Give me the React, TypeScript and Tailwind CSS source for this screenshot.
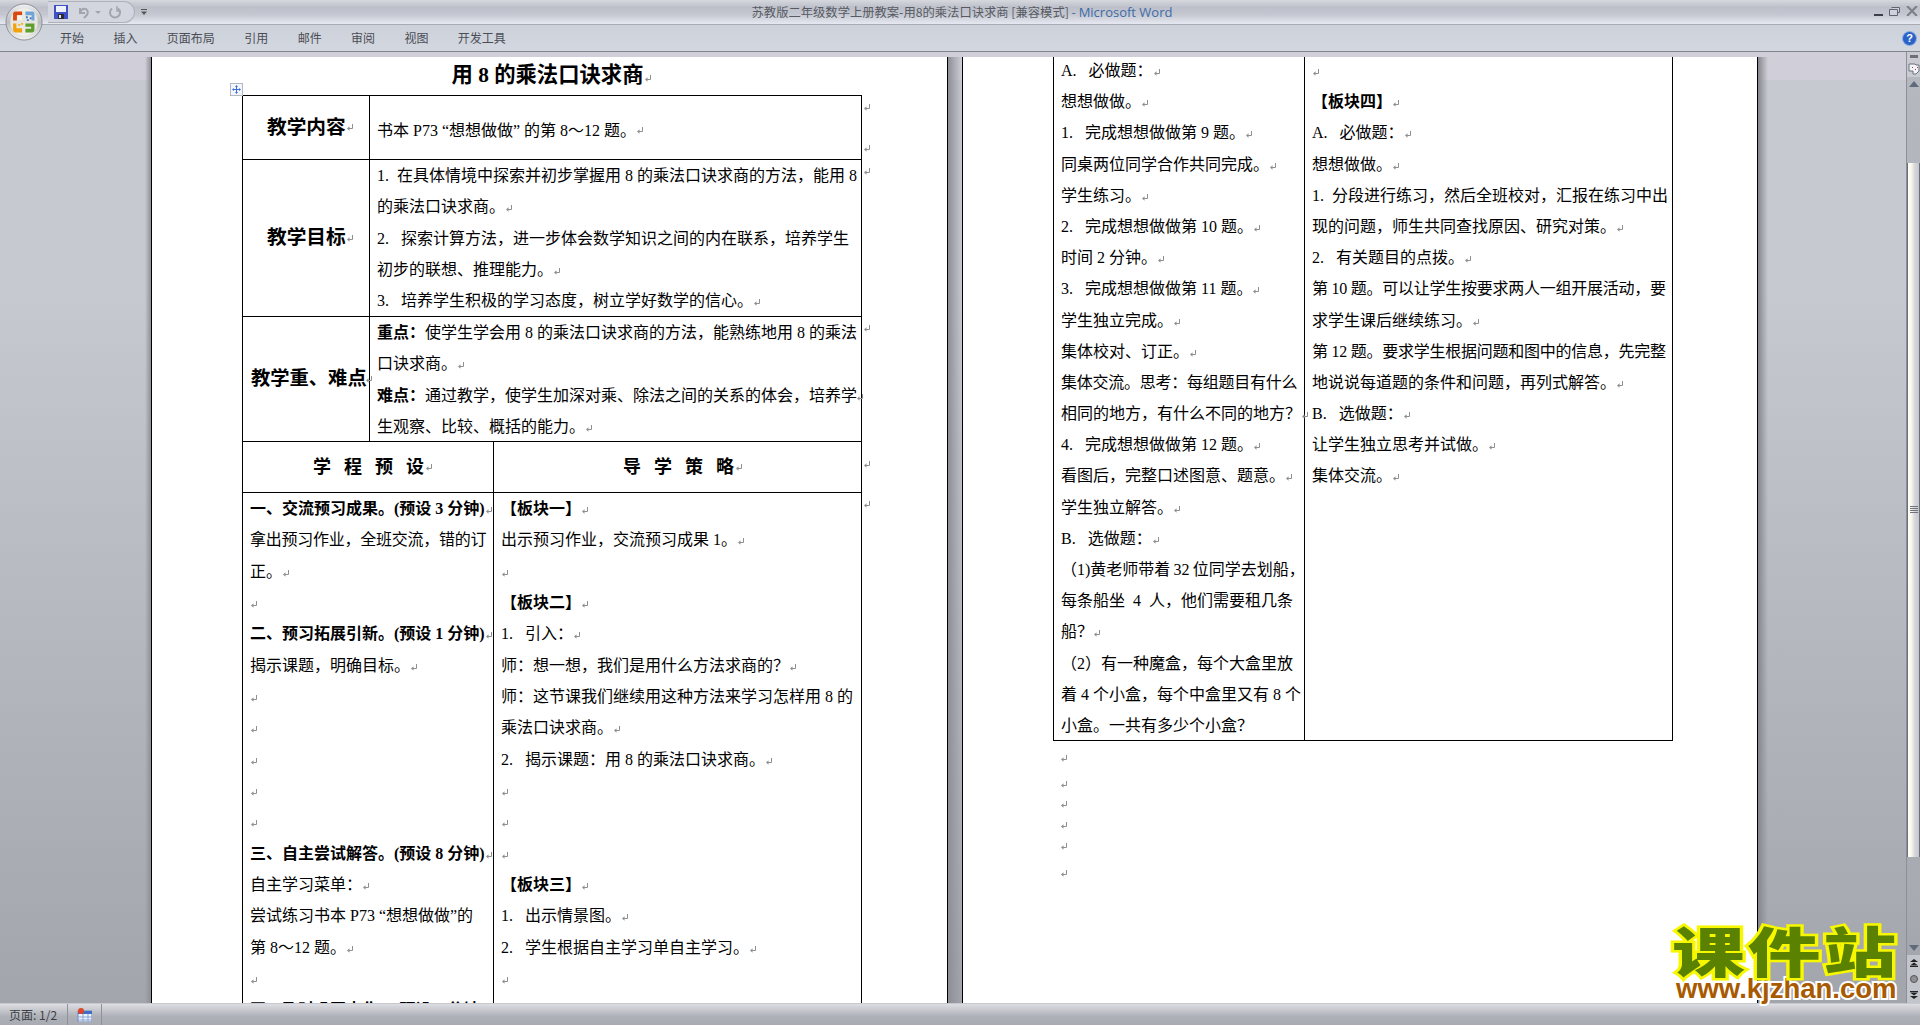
import React from "react";

const Mark = ({ className = "" }: { className?: string }) => (
  <svg viewBox="0 0 8 9" className={"inline-block w-[8px] h-[9px] shrink-0 align-[-1px] " + className}>
    <path d="M6.5 1v4.5H2" fill="none" stroke="#8f8f8f" strokeWidth="1" />
    <path d="M3.5 3.2v4.6L1 5.5z" fill="#8f8f8f" />
  </svg>
);

type L = { t?: string; b?: boolean; m?: boolean; s?: boolean };
const Line = ({ t = "", b = false, m = true, s = false, h }: L & { h: string }) => (
  <div className={(h === "a" ? "h-[31.33px] leading-[31.33px]" : "h-[31.2px] leading-[31.2px]") + " whitespace-pre " + (b ? "font-bold " : "") + (s ? "tracking-[-0.25px]" : "")}>
    {t}
    {m ? <Mark /> : null}
  </div>
);

const Lines = ({ items, h }: { items: L[]; h: string }) => (
  <>
    {items.map((it, i) => (
      <Line key={i} {...it} h={h} />
    ))}
  </>
);

const goal: L[] = [
  { t: "1.  在具体情境中探索并初步掌握用 8 的乘法口诀求商的方法，能用 8", m: false },
  { t: "的乘法口诀求商。" },
  { t: "2.   探索计算方法，进一步体会数学知识之间的内在联系，培养学生", m: false },
  { t: "初步的联想、推理能力。" },
  { t: "3.   培养学生积极的学习态度，树立学好数学的信心。" },
];

const left1: L[] = [
  { t: "一、交流预习成果。(预设 3 分钟)", b: true },
  { t: "拿出预习作业，全班交流，错的订", m: false, s: true },
  { t: "正。" },
  {},
  { t: "二、预习拓展引新。(预设 1 分钟)", b: true },
  { t: "揭示课题，明确目标。" },
  {},
  {},
  {},
  {},
  {},
  { t: "三、自主尝试解答。(预设 8 分钟)", b: true },
  { t: "自主学习菜单：" },
  { t: "尝试练习书本 P73 “想想做做”的", m: false },
  { t: "第 8～12 题。" },
  {},
  { t: "四、及时巩固内化。(预设 4 分钟)", b: true },
];

const right1: L[] = [
  { t: "【板块一】", b: true },
  { t: "出示预习作业，交流预习成果 1。" },
  {},
  { t: "【板块二】", b: true },
  { t: "1.   引入：" },
  { t: "师：想一想，我们是用什么方法求商的？" },
  { t: "师：这节课我们继续用这种方法来学习怎样用 8 的", m: false },
  { t: "乘法口诀求商。" },
  { t: "2.   揭示课题：用 8 的乘法口诀求商。" },
  {},
  {},
  {},
  { t: "【板块三】", b: true },
  { t: "1.   出示情景图。" },
  { t: "2.   学生根据自主学习单自主学习。" },
  {},
  { t: " ", m: false },
];

const left2: L[] = [
  { t: "A.   必做题：" },
  { t: "想想做做。" },
  { t: "1.   完成想想做做第 9 题。" },
  { t: "同桌两位同学合作共同完成。" },
  { t: "学生练习。" },
  { t: "2.   完成想想做做第 10 题。" },
  { t: "时间 2 分钟。" },
  { t: "3.   完成想想做做第 11 题。" },
  { t: "学生独立完成。" },
  { t: "集体校对、订正。" },
  { t: "集体交流。思考：每组题目有什么", m: false, s: true },
  { t: "相同的地方，有什么不同的地方？" },
  { t: "4.   完成想想做做第 12 题。" },
  { t: "看图后，完整口述图意、题意。" },
  { t: "学生独立解答。" },
  { t: "B.   选做题：" },
  { t: "（1)黄老师带着\u200932\u2009位同学去划船，", m: false },
  { t: "每条船坐  4  人，他们需要租几条", m: false },
  { t: "船？" },
  { t: "（2）有一种魔盒，每个大盒里放", m: false },
  { t: "着 4 个小盒，每个中盒里又有 8 个", m: false },
  { t: "小盒。一共有多少个小盒？", m: false },
];

const right2: L[] = [
  {},
  { t: "【板块四】", b: true },
  { t: "A.   必做题：" },
  { t: "想想做做。" },
  { t: "1.  分段进行练习，然后全班校对，汇报在练习中出", m: false },
  { t: "现的问题，师生共同查找原因、研究对策。" },
  { t: "2.   有关题目的点拨。" },
  { t: "第 10 题。可以让学生按要求两人一组开展活动，要", m: false, s: true },
  { t: "求学生课后继续练习。" },
  { t: "第 12 题。要求学生根据问题和图中的信息，先完整", m: false, s: true },
  { t: "地说说每道题的条件和问题，再列式解答。" },
  { t: "B.   选做题：" },
  { t: "让学生独立思考并试做。" },
  { t: "集体交流。" },
];

const Tabs = ["开始", "插入", "页面布局", "引用", "邮件", "审阅", "视图", "开发工具"];

const OfficeButton = () => (
  <svg viewBox="0 0 40 40" className="absolute left-[5px] top-[3px] w-[38px] h-[38px]">
    <defs>
      <linearGradient id="orb" x1="0" y1="0" x2="0" y2="1">
        <stop offset="0" stopColor="#eef0f2" />
        <stop offset="0.5" stopColor="#b9bcc0" />
        <stop offset="1" stopColor="#f2f2ee" />
      </linearGradient>
    </defs>
    <circle cx="20" cy="20" r="19" fill="url(#orb)" stroke="#8b8d92" strokeWidth="1" />
    <circle cx="20" cy="20" r="14.5" fill="#f4f2ea" opacity="0.75" />
    <path d="M8.5 18.5V11.5q0-2.500 2.500-2.500h7v4h-5.500v5.500z" fill="#d9480f" />
    <path d="M13 13h5v5h-5z" fill="#f6f3e8" />
    <path d="M21.500 9h7q2.500 0 2.500 2.500v7h-3V13h-6.500z" fill="#6fa4d8" />
    <path d="M22 14h2v2h-2zM26 15h2v2h-2zM23 17h2v2h-2z" fill="#3a7cc2" />
    <path d="M8.500 21.500h3.500v5h6v4.500h-7q-2.500 0-2.500-2.500z" fill="#f2a20c" />
    <path d="M14 22h2v2h-2zM17 21h2v2h-2z" fill="#e8b31a" />
    <path d="M21.500 21.500H31v7q0 2.500-2.500 2.500h-7v-4h6v-2h-6z" fill="#5f9e2f" />
  </svg>
);

const Arrow = ({ up }: { up?: boolean }) => (
  <svg viewBox="0 0 10 6" className="w-[10px] h-[6px]">
    <path d={up ? "M0 6 5 0l5 6z" : "M0 0l5 6 5-6z"} fill="#5f6a7c" />
  </svg>
);

const ScrollBar = () => (
  <div className="w-[14px] flex flex-col shrink-0 bg-[linear-gradient(to_bottom,#b6b8c0,#a8aab2_90%,#a0a2aa)] border-l border-[#8d8f97]">
    <div className="h-[8px] flex items-center justify-center bg-[#c9cad2]">
      <div className="w-[8px] h-[3px] bg-[#6d7078]" />
    </div>
    <div className="h-[17px] flex items-center justify-center bg-[#c9cbd2]">
      <svg viewBox="0 0 12 12" className="w-[12px] h-[12px]">
        <path d="M1 1h6l1 1h3v6l-3 3H5V8H1z" fill="#f3f3f6" stroke="#68707e" strokeWidth="1" />
        <path d="M4 4h1v1H4zM7 6h1v1H7zM9 4h1v1H9z" fill="#8b4a5e" />
      </svg>
    </div>
    <div className="h-[14px] flex items-center justify-center"><Arrow up /></div>
    <div className="h-[72px]" />
    <div className="h-[694px] flex items-center justify-center border-x border-[#6e7078] bg-[linear-gradient(to_right,#ffffff,#fbf8e8_30%,#d6d8de_60%,#c4c7d0)]">
      <div className="w-[8px] h-[8px] bg-[repeating-linear-gradient(to_bottom,#70737a_0,#70737a_1px,transparent_1px,transparent_2px)]" />
    </div>
    <div className="flex-1" />
    <div className="h-[14px] flex items-center justify-center"><Arrow /></div>
    <div className="h-[48px] bg-[#c3c5cc] flex flex-col items-center justify-around text-[#222]">
      <svg viewBox="0 0 8 8" className="w-[8px] h-[8px]"><path d="M4 0 8 3H0zM4 3.500 8 6.500H0zM0 7h8v1H0z" fill="#222" /></svg>
      <div className="w-[8px] h-[8px] rounded-full bg-[#8e9096] border border-[#555]" />
      <svg viewBox="0 0 8 8" className="w-[8px] h-[8px]"><path d="M0 0h8v1H0zM0 1.500h8L4 4.500zM0 5h8L4 8z" fill="#222" /></svg>
    </div>
  </div>
);

export default function App() {
  return (
    <div className="relative w-[1920px] h-[1025px] overflow-hidden flex flex-col font-['Liberation_Serif','Noto_Sans_CJK_SC',serif] text-black text-[16px]">
      {/* Title bar */}
      <div className="h-[24px] shrink-0 grid grid-cols-[1fr_auto_1fr] items-center bg-[linear-gradient(to_bottom,#d6d8de_0,#bdc0ca_30%,#c4c7d0_60%,#e6e9f1_100%)] font-['Noto_Sans_CJK_SC',sans-serif]">
        <div className="flex items-center">
          <div className="ml-[48px] w-[87px] h-[22px] flex items-center pl-[6px] rounded-r-full border border-l-0 border-[#aeb1ba] bg-[#d3d6de]">
            <svg viewBox="0 0 14 14" className="w-[14px] h-[14px]">
              <path d="M0 0h14v14H0z" fill="#3f4fc4" />
              <path d="M2 1h10v6H2z" fill="#eef0fb" />
              <path d="M4 9h6v5H4z" fill="#2b2b35" />
              <path d="M5 10h2v3H5z" fill="#dfe2ea" />
            </svg>
            <svg viewBox="0 0 12 13" className="ml-[9px] w-[12px] h-[13px]">
              <path d="M3 2v5h5" fill="none" stroke="#a2a5ad" strokeWidth="2" />
              <path d="M3 6q2-4 6-3 3 2 1 6l-3 3" fill="none" stroke="#a2a5ad" strokeWidth="2" />
            </svg>
            <svg viewBox="0 0 6 3" className="ml-[6px] w-[6px] h-[3px]"><path d="M0 0h6L3 3z" fill="#a2a5ad" /></svg>
            <svg viewBox="0 0 13 13" className="ml-[8px] w-[13px] h-[13px]">
              <path d="M9 2.500a5 5 0 1 1-6 0" fill="none" stroke="#a2a5ad" strokeWidth="2" />
              <path d="M8 0v5h4" fill="none" stroke="#a2a5ad" strokeWidth="1.500" />
            </svg>
          </div>
          <svg viewBox="0 0 6 6" className="ml-[6px] w-[6px] h-[6px]"><path d="M0 0h6v1H0zM0 2.500h6L3 6z" fill="#555" /></svg>
        </div>
        <div className="pl-[4px] text-[12.3px] leading-none text-[#575a62] whitespace-pre">
          苏教版二年级数学上册教案-用8的乘法口诀求商 [兼容模式]<span className="text-[#3f6ba8]"> - </span>
          <span className="text-[#3f6ba8] text-[13px] font-['Open_Sans',sans-serif]">Microsoft Word</span>
        </div>
        <div className="flex items-center justify-end pr-[2px] gap-[6px]">
          <div className="w-[9px] h-[2px] mt-[6px] bg-[#3c4048]" />
          <svg viewBox="0 0 11 9" className="w-[11px] h-[9px] mb-[2px]">
            <path d="M2.500.5h8v5h-2M.5 2.500h8v6h-8z" fill="#cfd2da" stroke="#5f6470" strokeWidth="1" />
          </svg>
          <svg viewBox="0 0 11 9" className="w-[12px] h-[10px] mb-[2px]">
            <path d="M1 0l9 9M10 0 1 9" stroke="#7c8089" strokeWidth="2" />
          </svg>
        </div>
      </div>

      {/* Tabs */}
      <div className="h-[28px] shrink-0 flex items-center justify-between pl-[60px] pr-[3px] border-t border-b border-t-[#a8abb4] border-b-[#81858c] bg-[linear-gradient(to_bottom,#cdd1da,#d3d7df)] font-['Noto_Sans_CJK_SC',sans-serif] text-[12px] text-[#4a4d55]">
        <div className="flex gap-[29.4px]">
          {Tabs.map((t) => (
            <span key={t}>{t}</span>
          ))}
        </div>
        <div className="w-[15px] h-[15px] rounded-full bg-[#2a62c8] border border-[#8fb2e6] flex items-center justify-center text-white text-[11px] font-bold font-['Liberation_Sans',sans-serif]">?</div>
      </div>

      <OfficeButton />

      {/* Workspace */}
      <div className="flex-1 min-h-0 flex bg-[linear-gradient(to_bottom,#d0ced8_0,#d0ced8_28px,#c7c9d1_28px,#c7c9d1_25%,#a3a5ac_100%)]">
        <div className="flex-1 min-w-0 pt-[5px] flex">
          <div className="w-[145px] shrink-0" />
          <div className="w-[6px] shrink-0 bg-[linear-gradient(to_right,transparent,#8d8f96)]" />

          {/* Page 1 */}
          <div className="relative w-[797px] shrink-0 bg-white border-x border-black overflow-hidden pl-[90px]">
            <div className="w-[620px] h-[38px] flex items-center justify-center text-[21.33px] font-bold whitespace-pre">
              用 8 的乘法口诀求商<Mark className="ml-[1px] mt-[4px]" />
            </div>
            <div className="absolute left-[78px] top-[26px] w-[13px] h-[13px] border border-[#b4b8c2] bg-[#f4f6fb] flex items-center justify-center">
              <svg viewBox="0 0 9 9" className="w-[9px] h-[9px]">
                <path d="M4.500 0 6 2H3zM4.500 9 3 7h3zM0 4.500 2 3v3zM9 4.500 7 6V3z" fill="#3a6fd8" />
                <path d="M4.500 1v7M1 4.500h7" stroke="#3a6fd8" strokeWidth="1" />
              </svg>
            </div>

            <div className="flex items-start">
              <div className="w-[620px] h-[64px] shrink-0 flex border-x border-t border-black">
                <div className="w-[127px] shrink-0 border-r border-black flex items-center pl-[24px] text-[19.7px] font-bold">
                  教学内容<Mark />
                </div>
                <div className="flex-1 flex items-center pl-[7px] pt-[6px] whitespace-pre">
                  书本 P73 “想想做做” 的第 8～12 题。<Mark />
                </div>
              </div>
              <div className="flex flex-col ml-[1px] pt-[8px] gap-[32px]">
                <Mark />
                <Mark />
              </div>
            </div>

            <div className="flex items-start">
              <div className="w-[620px] h-[157px] shrink-0 flex border-x border-t border-black">
                <div className="w-[127px] shrink-0 border-r border-black flex items-center pl-[24px] text-[19.7px] font-bold">
                  教学目标<Mark />
                </div>
                <div className="flex-1 pl-[7px]">
                  <Lines items={goal} h="a" />
                </div>
              </div>
              <Mark className="ml-[1px] mt-[8px]" />
            </div>

            <div className="flex items-start">
              <div className="w-[620px] h-[125px] shrink-0 flex border-x border-t border-black">
                <div className="w-[127px] shrink-0 border-r border-black flex items-center pl-[8px] text-[19.3px] font-bold whitespace-nowrap">
                  教学重、难点<Mark className="ml-[-2px]" />
                </div>
                <div className="flex-1 pl-[7px] whitespace-pre">
                  <div className="h-[31.33px] leading-[31.33px]"><b>重点：</b>使学生学会用 8 的乘法口诀求商的方法，能熟练地用 8 的乘法</div>
                  <div className="h-[31.33px] leading-[31.33px]">口诀求商。<Mark /></div>
                  <div className="h-[31.33px] leading-[31.33px]"><b>难点：</b>通过教学，使学生加深对乘、除法之间的关系的体会，培养学<Mark className="ml-[-1px]" /></div>
                  <div className="h-[31.33px] leading-[31.33px]">生观察、比较、概括的能力。<Mark /></div>
                </div>
              </div>
              <Mark className="ml-[1px] mt-[8px]" />
            </div>

            <div className="flex items-start">
              <div className="w-[620px] h-[51px] shrink-0 flex border-x border-t border-black text-[18px] font-bold">
                <div className="w-[251px] shrink-0 border-r border-black flex items-center pl-[70px] tracking-[13px] whitespace-nowrap">
                  学程预设<Mark className="ml-[-12px]" />
                </div>
                <div className="flex-1 flex items-center pl-[129px] tracking-[13px] whitespace-nowrap">
                  导学策略<Mark className="ml-[-12px]" />
                </div>
              </div>
              <Mark className="ml-[1px] mt-[19px]" />
            </div>

            <div className="flex items-start">
              <div className="w-[620px] shrink-0 flex border-x border-t border-black">
                <div className="w-[251px] shrink-0 border-r border-black pl-[7px]">
                  <Lines items={left1} h="a" />
                </div>
                <div className="flex-1 pl-[7px]">
                  <Lines items={right1} h="a" />
                </div>
              </div>
              <Mark className="ml-[1px] mt-[8px]" />
            </div>
          </div>

          <div className="w-[14px] shrink-0 bg-[linear-gradient(to_right,#8d8f96,transparent)]" />

          {/* Page 2 */}
          <div className="w-[796px] shrink-0 bg-white border-x border-black overflow-hidden pl-[90px]">
            <div className="w-[620px] h-[684px] flex border-x border-b border-black">
              <div className="w-[251px] shrink-0 border-r border-black pl-[7px]">
                <div className="-mt-[2px]">
                  <Lines items={left2} h="b" />
                </div>
              </div>
              <div className="flex-1 pl-[7px]">
                <div className="-mt-[2px]">
                  <Lines items={right2} h="b" />
                </div>
              </div>
            </div>
            <div className="flex flex-col items-start pl-[7px]">
              <Mark className="mt-[13px]" />
              <Mark className="mt-[17px]" />
              <Mark className="mt-[11px]" />
              <Mark className="mt-[12px]" />
              <Mark className="mt-[12px]" />
              <Mark className="mt-[18px]" />
            </div>
          </div>
          <div className="w-[10px] shrink-0 bg-[linear-gradient(to_right,#85878e,transparent)]" />
        </div>
        <ScrollBar />
      </div>

      {/* Status bar */}
      <div className="h-[22px] shrink-0 flex items-stretch border-t border-[#c6c8ce] bg-[linear-gradient(to_bottom,#dcdee3_0,#c5c7cd_30%,#aeb0b8_60%,#a9abb3_100%)] font-['Noto_Sans_CJK_SC',sans-serif] text-[12px] text-[#3b3d44]">
        <div className="w-[68px] pl-[9px] flex items-center border-r border-[#8f9198]">页面: 1/2</div>
        <div className="w-[34px] flex items-center justify-center border-r border-[#8f9198]">
          <svg viewBox="0 0 15 14" className="w-[15px] h-[14px]">
            <path d="M1 3h14v11H1z" fill="#eef2fa" stroke="#6d8bc0" strokeWidth="1" />
            <path d="M1 3h14v3H1z" fill="#3f6fc4" />
            <path d="M1 9h14M1 12h14M6 6v8M11 6v8" stroke="#8aa5d4" strokeWidth="1" />
            <circle cx="4" cy="3" r="3" fill="#e0452a" />
          </svg>
        </div>
      </div>

      {/* Watermark */}
      <div className="absolute left-[1672px] top-[924px] flex flex-col items-start pointer-events-none">
        <div className="h-[52px] leading-[52px] origin-left scale-x-[1.35] font-['Noto_Sans_CJK_SC',sans-serif] font-black text-[54px] tracking-[2px] whitespace-nowrap text-[#5a8200] [-webkit-text-stroke:5px_#f7f700] [paint-order:stroke_fill]">
          课件站
        </div>
        <div className="ml-[4px] h-[26px] leading-[26px] font-['Liberation_Sans',sans-serif] font-bold text-[27.5px] whitespace-nowrap text-[#a85a00] [-webkit-text-stroke:4px_#ffffff] [paint-order:stroke_fill]">
          www.kjzhan.com
        </div>
      </div>
    </div>
  );
}
